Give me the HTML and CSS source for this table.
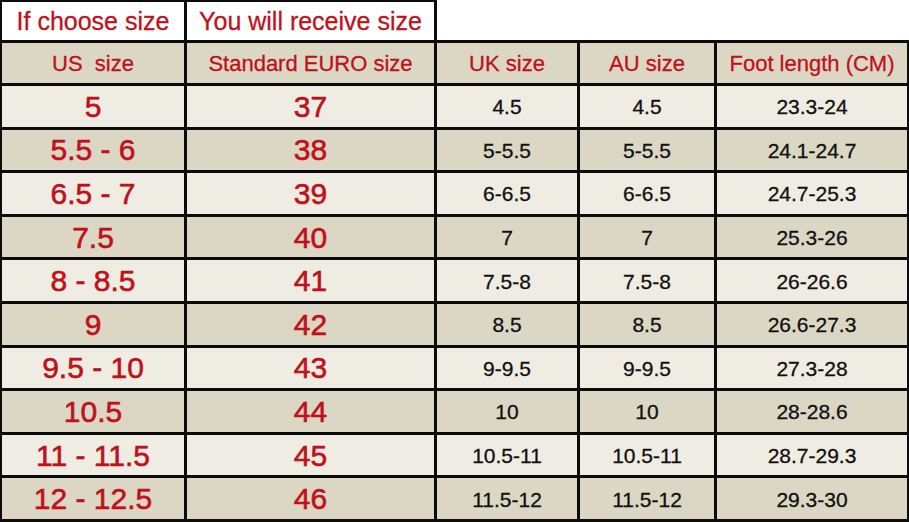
FILE: index.html
```html
<!DOCTYPE html>
<html lang="en">
<head>
<meta charset="utf-8">
<title>Size chart</title>
<link rel="stylesheet" href="styles.css">
</head>
<body>
<div class="chart">
  <div class="cell top">If choose size</div>
  <div class="cell top">You will receive size</div>
  <div class="cell blank"></div>

  <div class="cell head">US&nbsp; size</div>
  <div class="cell head">Standard EURO size</div>
  <div class="cell head">UK size</div>
  <div class="cell head">AU size</div>
  <div class="cell head">Foot length (CM)</div>

  <div class="cell lt big">5</div><div class="cell lt big">37</div><div class="cell lt num">4.5</div><div class="cell lt num">4.5</div><div class="cell lt num">23.3-24</div>
  <div class="cell dk big">5.5 - 6</div><div class="cell dk big">38</div><div class="cell dk num">5-5.5</div><div class="cell dk num">5-5.5</div><div class="cell dk num">24.1-24.7</div>
  <div class="cell lt big">6.5 - 7</div><div class="cell lt big">39</div><div class="cell lt num">6-6.5</div><div class="cell lt num">6-6.5</div><div class="cell lt num">24.7-25.3</div>
  <div class="cell dk big">7.5</div><div class="cell dk big">40</div><div class="cell dk num">7</div><div class="cell dk num">7</div><div class="cell dk num">25.3-26</div>
  <div class="cell lt big">8 - 8.5</div><div class="cell lt big">41</div><div class="cell lt num">7.5-8</div><div class="cell lt num">7.5-8</div><div class="cell lt num">26-26.6</div>
  <div class="cell dk big">9</div><div class="cell dk big">42</div><div class="cell dk num">8.5</div><div class="cell dk num">8.5</div><div class="cell dk num">26.6-27.3</div>
  <div class="cell lt big">9.5 - 10</div><div class="cell lt big">43</div><div class="cell lt num">9-9.5</div><div class="cell lt num">9-9.5</div><div class="cell lt num">27.3-28</div>
  <div class="cell dk big">10.5</div><div class="cell dk big">44</div><div class="cell dk num">10</div><div class="cell dk num">10</div><div class="cell dk num">28-28.6</div>
  <div class="cell lt big">11 - 11.5</div><div class="cell lt big">45</div><div class="cell lt num">10.5-11</div><div class="cell lt num">10.5-11</div><div class="cell lt num">28.7-29.3</div>
  <div class="cell dk big">12 - 12.5</div><div class="cell dk big">46</div><div class="cell dk num">11.5-12</div><div class="cell dk num">11.5-12</div><div class="cell dk num">29.3-30</div>
</div>
</body>
</html>
```
FILE: styles.css
```css
html, body {
  margin: 0;
  padding: 0;
  background: #ffffff;
}

.chart {
  box-sizing: border-box;
  width: 909px;
  height: 522px;
  display: grid;
  grid-template-columns: 182px 247px 140px 134px 190px;
  grid-template-rows: 38px 40px repeat(10, 1fr);
  column-gap: 3px;
  row-gap: 3px;
  padding: 2px 2px 3px 2px;
  background: #0b0b0b;
  font-family: "Liberation Sans", Arial, sans-serif;
}

.cell {
  display: flex;
  align-items: center;
  justify-content: center;
  white-space: nowrap;
  line-height: 1;
  padding-top: 1px;
}

.top {
  background: #ffffff;
  color: #c0111b;
  font-size: 25px;
  -webkit-text-stroke: 0.3px #c0111b;
}

.blank {
  grid-column: 3 / 6;
  background: #ffffff;
  margin-top: -2px;
  margin-right: -2px;
}

.head {
  background: #dbd7c4;
  color: #c0111b;
  font-size: 22px;
  -webkit-text-stroke: 0.3px #c0111b;
}

.lt {
  background: #efece3;
}

.dk {
  background: #dbd7c4;
}

.big {
  color: #c0111b;
  font-size: 30px;
  -webkit-text-stroke: 0.6px #c0111b;
}

.num {
  color: #111111;
  font-size: 21px;
  -webkit-text-stroke: 0.3px #111111;
}
```
